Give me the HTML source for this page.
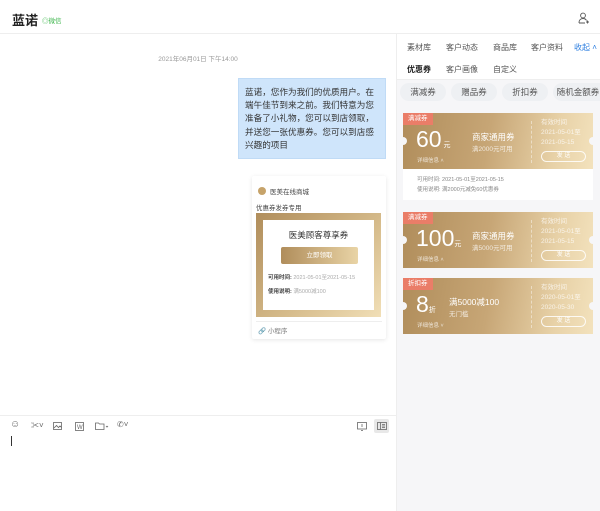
<!DOCTYPE html>
<html><head><meta charset="utf-8"><style>
*{margin:0;padding:0;box-sizing:border-box}
body{width:600px;height:511px;overflow:hidden;background:#fff;font-family:"Liberation Sans","Noto Sans CJK SC",sans-serif;position:relative;color:#333}
.abs{position:absolute}
.hdr{left:0;top:0;width:600px;height:34px;border-bottom:1px solid #eee;background:#fff}
.right{left:396px;top:34px;width:204px;height:477px;background:#f6f6f8;border-left:1px solid #eee}
.tabs{left:0;top:0;width:204px;height:46px;background:#fff;border-bottom:1px solid #eee;font-size:8px;color:#555}
.tabs span{position:absolute}
.chip{top:49px;height:18px;border-radius:9px;background:#eef0f3;font-size:8.5px;color:#555;text-align:center;line-height:18px}
.cp{left:6px;width:190px;height:56px;background:linear-gradient(100deg,#b08d5b 0%,#c7a676 45%,#e8d2a8 80%,#f3e2bd 100%);color:#fff}
.tag{left:0;top:0;height:12px;padding:0 5px;background:#ea7d68;font-size:6.5px;line-height:12px;color:#fff}
.notch{width:8px;height:8px;border-radius:50%;background:#f6f6f8;top:24px}
.dash{left:128px;top:8px;height:42px;border-left:1px dashed rgba(255,255,255,.45)}
.btn{left:138px;top:38px;width:45px;height:11px;border:1px solid rgba(255,255,255,.85);border-radius:6px;font-size:6px;text-align:center;line-height:9px}
.sm{font-size:6.5px;color:rgba(255,255,255,.75)}
</style></head><body>
<div class="abs hdr">
 <div class="abs" style="left:12px;top:10px;font-size:13px;font-weight:bold;color:#222">蓝诺</div>
 <div class="abs" style="left:42px;top:15px;font-size:6.5px;color:#3bb54a">◎微信</div>
 <svg class="abs" style="left:578px;top:12px" width="12" height="12" viewBox="0 0 12 12" fill="none" stroke="#555" stroke-width="0.9"><circle cx="5" cy="3.5" r="2.4"/><path d="M1 11c0-3 1.8-4.5 4-4.5s3 1 3.5 2"/><path d="M1 11h6M9.5 8.5v3M8 10h3"/></svg>
</div>
<div class="abs" style="left:0;top:53px;width:396px;text-align:center;font-size:6.5px;color:#999">2021年06月01日 下午14:00</div>
<div class="abs" style="left:238px;top:78px;width:148px;height:81px;background:#cfe5fb;border:1px solid #c0dbf6;padding:7px 4px 0 6px;font-size:8.6px;line-height:13.2px;color:#333">蓝诺，您作为我们的优质用户。在端午佳节到来之前。我们特意为您准备了小礼物，您可以到店领取，并送您一张优惠券。您可以到店感兴趣的项目</div>
<div class="abs" style="left:252px;top:176px;width:134px;height:163px;background:#fff;box-shadow:0 1px 4px rgba(0,0,0,.1);border-radius:2px">
 <div class="abs" style="left:6px;top:11px;width:8px;height:8px;border-radius:50%;background:#c6a36a"></div>
 <div class="abs" style="left:18px;top:10px;font-size:6.5px;color:#444">医美在线商城</div>
 <div class="abs" style="left:4px;top:26px;font-size:6.5px;color:#444">优惠券发券专用</div>
 <div class="abs" style="left:4px;top:37px;width:125px;height:104px;background:linear-gradient(135deg,#b08d5b,#d7bd8d 60%,#f1dfb7)">
  <div class="abs" style="left:7px;top:7px;width:111px;height:90px;background:#fff">
   <div class="abs" style="left:0;top:9px;width:111px;text-align:center;font-size:8.5px;color:#333">医美顾客尊享券</div>
   <div class="abs" style="left:18px;top:27px;width:77px;height:17px;border-radius:2px;background:linear-gradient(90deg,#b08d5b,#e9d4a6);color:#fff;font-size:6.5px;text-align:center;line-height:17px">立即领取</div>
   <div class="abs" style="left:5px;top:53px;font-size:5.5px;color:#444"><b>可用时间:</b> <span style="color:#aaa">2021-05-01至2021-05-15</span></div>
   <div class="abs" style="left:5px;top:67px;font-size:5.5px;color:#444"><b>使用说明:</b> <span style="color:#aaa">满5000减100</span></div>
  </div>
 </div>
 <div class="abs" style="left:4px;top:145px;width:126px;border-top:1px solid #eee"></div>
 <div class="abs" style="left:6px;top:149px;font-size:6.5px;color:#777"><span style="color:#7b6fd6">🔗</span> 小程序</div>
</div>
<div class="abs" style="left:0;top:415px;width:396px;border-top:1px solid #eee"></div>
<div class="abs" style="left:10px;top:419px;font-size:10px;color:#666">☺</div>
<div class="abs" style="left:31px;top:420px;font-size:8px;color:#666">✂˅</div>
<svg class="abs" style="left:53px;top:422px" width="9" height="8" fill="none" stroke="#666" stroke-width=".8"><rect x=".5" y=".5" width="8" height="7"/><path d="M1 6l2.5-2.5 2 2 1.5-1.5 1.5 1.5"/></svg>
<svg class="abs" style="left:75px;top:422px" width="9" height="9" fill="none" stroke="#666" stroke-width=".8"><rect x=".5" y=".5" width="8" height="8"/><text x="2" y="7" font-size="6" fill="#666" stroke="none">W</text></svg>
<svg class="abs" style="left:95px;top:422px" width="14" height="8" fill="none" stroke="#666" stroke-width=".8"><path d="M.5 1h3l1 1h4.5v5.5h-8.5z"/><path d="M11 4l1 1 1-1"/></svg>
<div class="abs" style="left:117px;top:420px;font-size:8px;color:#666">✆˅</div>
<svg class="abs" style="left:357px;top:422px" width="10" height="9" fill="none" stroke="#666" stroke-width=".8"><rect x=".5" y=".5" width="9" height="6.5"/><path d="M5 2v3M4 8.5h2"/></svg>
<div class="abs" style="left:374px;top:419px;width:15px;height:14px;background:#e8e8e8;border-radius:2px"></div>
<svg class="abs" style="left:377px;top:422px" width="10" height="8" fill="none" stroke="#666" stroke-width=".8"><rect x=".5" y=".5" width="9" height="7"/><path d="M3.5 .5v7M5 2.5h3M5 4h3M5 5.5h3"/></svg>
<div class="abs" style="left:11px;top:436px;width:1px;height:10px;background:#333"></div>

<div class="abs right">
 <div class="abs tabs">
  <span style="left:10px;top:8px">素材库</span><span style="left:49px;top:8px">客户动态</span><span style="left:96px;top:8px">商品库</span><span style="left:134px;top:8px">客户资料</span><span style="left:177px;top:8px;color:#2e7fe0">收起 ˄</span>
  <span style="left:10px;top:30px;font-weight:bold;color:#222">优惠券</span><span style="left:49px;top:30px">客户画像</span><span style="left:96px;top:30px">自定义</span>
 </div>
 <div class="abs chip" style="left:3px;width:46px">满减券</div>
 <div class="abs chip" style="left:54px;width:46px">赠品券</div>
 <div class="abs chip" style="left:105px;width:46px">折扣券</div>
 <div class="abs chip" style="left:156px;width:50px;border-radius:9px 0 0 9px">随机金额券</div>

 <div class="abs cp" style="top:79px">
  <div class="abs tag">满减券</div><div class="abs notch" style="left:-4px"></div><div class="abs notch" style="left:186px"></div>
  <div class="abs" style="left:13px;top:13px;font-size:23px">60<span style="font-size:7px"> 元</span></div>
  <div class="abs sm" style="left:14px;top:43px;font-size:5.5px">详细信息 ˄</div>
  <div class="abs" style="left:69px;top:18px;font-size:8.5px">商家通用券</div>
  <div class="abs sm" style="left:69px;top:30px">满2000元可用</div>
  <div class="abs dash"></div>
  <div class="abs sm" style="left:138px;top:5px;line-height:10px">有效时间<br>2021-05-01至<br>2021-05-15</div>
  <div class="abs btn">发 送</div>
 </div>
 <div class="abs" style="left:6px;top:135px;width:190px;height:31px;background:#fff;font-size:5.5px;color:#888;padding:6px 0 0 14px;line-height:10px">可用时间: 2021-05-01至2021-05-15<br>使用说明: 满2000元减免60优惠券</div>

 <div class="abs cp" style="top:178px">
  <div class="abs tag">满减券</div><div class="abs notch" style="left:-4px"></div><div class="abs notch" style="left:186px"></div>
  <div class="abs" style="left:13px;top:13px;font-size:23px">100<span style="font-size:7px">元</span></div>
  <div class="abs sm" style="left:14px;top:43px;font-size:5.5px">详细信息 ˄</div>
  <div class="abs" style="left:69px;top:18px;font-size:8.5px">商家通用券</div>
  <div class="abs sm" style="left:69px;top:30px">满5000元可用</div>
  <div class="abs dash"></div>
  <div class="abs sm" style="left:138px;top:5px;line-height:10px">有效时间<br>2021-05-01至<br>2021-05-15</div>
  <div class="abs btn">发 送</div>
 </div>

 <div class="abs cp" style="top:244px">
  <div class="abs tag">折扣券</div><div class="abs notch" style="left:-4px"></div><div class="abs notch" style="left:186px"></div>
  <div class="abs" style="left:13px;top:13px;font-size:23px">8<span style="font-size:7px">折</span></div>
  <div class="abs sm" style="left:14px;top:43px;font-size:5.5px">详细信息 ˅</div>
  <div class="abs" style="left:46px;top:18px;font-size:8.5px">满5000减100</div>
  <div class="abs sm" style="left:46px;top:30px">无门槛</div>
  <div class="abs dash"></div>
  <div class="abs sm" style="left:138px;top:5px;line-height:10px">有效时间<br>2020-05-01至<br>2020-05-30</div>
  <div class="abs btn">发 送</div>
 </div>
</div>
</body></html>
